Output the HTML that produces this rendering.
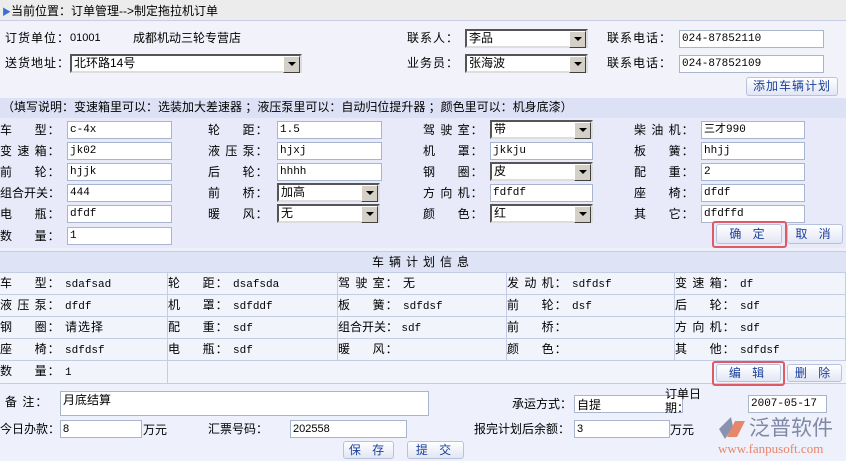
<!DOCTYPE html>
<html><head><meta charset="utf-8"><style>
*{margin:0;padding:0;box-sizing:border-box}
body{width:846px;height:461px;overflow:hidden;background:#eef0fb;font:12px "Liberation Sans","Noto Sans CJK SC",sans-serif;color:#000;position:relative}
.a{position:absolute;white-space:nowrap;line-height:14px}
.l{letter-spacing:1px}
.i{position:absolute;background:#fff;border:1px solid #a9b5cc;height:18px;font:11px "Liberation Mono","Noto Sans CJK SC",monospace;line-height:16px;padding-left:2px;white-space:nowrap}
.s{position:absolute;background:#fff;border:2px solid;border-color:#555 #ddd #ddd #555;height:19px;font-size:12px;line-height:15px;padding-left:2px;white-space:nowrap}
.s:after{content:"";position:absolute;right:0;top:0;width:15px;height:15px;background:#d4d0c8;border:1px solid;border-color:#fff #404040 #404040 #fff}
.s b{position:absolute;right:4px;top:6px;width:0;height:0;border-left:4px solid transparent;border-right:4px solid transparent;border-top:4px solid #000;z-index:2}
.b{position:absolute;background:linear-gradient(#fff,#e2e6f4);border:1px solid #b8c2dc;border-radius:3px;color:#1a3f9c;text-align:center;font-size:12px;line-height:17px;letter-spacing:4px}
.r{position:absolute;border:2px solid #e05a66;border-radius:3px}
.tc{position:absolute;border-right:1px solid #c5cde4;border-bottom:1px solid #c5cde4;height:22px;line-height:21px;font-size:12px;white-space:nowrap;letter-spacing:1px}
.tc span{font:11px "Liberation Mono",monospace;letter-spacing:0}
</style></head><body>
<div style="position:absolute;left:0;top:0;width:846px;height:21px;background:#ececec;border-bottom:1px solid #c8cfe6"></div>
<div class="a" style="left:2px;top:4px;font-size:12px"><span style="color:#3b6fd0;font-size:9px">▶</span>当前位置：订单管理-->制定拖拉机订单</div>
<div style="position:absolute;left:0;top:22px;width:846px;height:76px;background:#f2f3fa"></div>
<div class="a l" style="left:5px;top:31px">订货单位：</div><div class="a" style="left:70px;top:31px;font-size:11px">01001</div><div class="a" style="left:133px;top:31px">成都机动三轮专营店</div>
<div class="a l" style="left:407px;top:31px">联系人：</div><div class="s" style="left:465px;top:29px;width:123px">李品<b></b></div>
<div class="a l" style="left:607px;top:31px">联系电话：</div><div class="i" style="left:679px;top:30px;width:145px">024-87852110</div>
<div class="a l" style="left:5px;top:56px">送货地址：</div><div class="s" style="left:70px;top:54px;width:232px">北环路14号<b></b></div>
<div class="a l" style="left:407px;top:56px">业务员：</div><div class="s" style="left:465px;top:54px;width:123px">张海波<b></b></div>
<div class="a l" style="left:607px;top:56px">联系电话：</div><div class="i" style="left:679px;top:55px;width:145px">024-87852109</div>
<div class="b" style="left:746px;top:77px;width:92px;height:19px;letter-spacing:1px">添加车辆计划</div>
<div style="position:absolute;left:0;top:98px;width:846px;height:20px;background:#dde1f5"></div>
<div class="a" style="left:2px;top:100px">（填写说明：变速箱里可以：选装加大差速器 ；液压泵里可以：自动归位提升器 ；颜色里可以：机身底漆）</div>
<div style="position:absolute;left:0;top:118px;width:846px;height:130px;background:#e8eaf9"></div>

<div class="a l" style="left:0;top:123px">车&nbsp;&nbsp;&nbsp;&nbsp;&nbsp;型：</div><div class="i" style="left:67px;top:121px;width:105px">c-4x</div>
<div class="a l" style="left:0;top:144px">变 速 箱：</div><div class="i" style="left:67px;top:142px;width:105px">jk02</div>
<div class="a l" style="left:0;top:165px">前&nbsp;&nbsp;&nbsp;&nbsp;&nbsp;轮：</div><div class="i" style="left:67px;top:163px;width:105px">hjjk</div>
<div class="a" style="left:0;top:186px">组合开关：</div><div class="i" style="left:67px;top:184px;width:105px">444</div>
<div class="a l" style="left:0;top:207px">电&nbsp;&nbsp;&nbsp;&nbsp;&nbsp;瓶：</div><div class="i" style="left:67px;top:205px;width:105px">dfdf</div>
<div class="a l" style="left:0;top:229px">数&nbsp;&nbsp;&nbsp;&nbsp;&nbsp;量：</div><div class="i" style="left:67px;top:227px;width:105px">1</div>

<div class="a l" style="left:208px;top:123px">轮&nbsp;&nbsp;&nbsp;&nbsp;&nbsp;距：</div><div class="i" style="left:277px;top:121px;width:105px">1.5</div>
<div class="a l" style="left:208px;top:144px">液 压 泵：</div><div class="i" style="left:277px;top:142px;width:105px">hjxj</div>
<div class="a l" style="left:208px;top:165px">后&nbsp;&nbsp;&nbsp;&nbsp;&nbsp;轮：</div><div class="i" style="left:277px;top:163px;width:105px">hhhh</div>
<div class="a l" style="left:208px;top:186px">前&nbsp;&nbsp;&nbsp;&nbsp;&nbsp;桥：</div><div class="s" style="left:277px;top:183px;width:103px">加高<b></b></div>
<div class="a l" style="left:208px;top:207px">暖&nbsp;&nbsp;&nbsp;&nbsp;&nbsp;风：</div><div class="s" style="left:277px;top:204px;width:103px">无<b></b></div>

<div class="a l" style="left:423px;top:123px">驾 驶 室：</div><div class="s" style="left:490px;top:120px;width:103px">带<b></b></div>
<div class="a l" style="left:423px;top:144px">机&nbsp;&nbsp;&nbsp;&nbsp;&nbsp;罩：</div><div class="i" style="left:490px;top:142px;width:103px">jkkju</div>
<div class="a l" style="left:423px;top:165px">钢&nbsp;&nbsp;&nbsp;&nbsp;&nbsp;圈：</div><div class="s" style="left:490px;top:162px;width:103px">皮<b></b></div>
<div class="a l" style="left:423px;top:186px">方 向 机：</div><div class="i" style="left:490px;top:184px;width:103px">fdfdf</div>
<div class="a l" style="left:423px;top:207px">颜&nbsp;&nbsp;&nbsp;&nbsp;&nbsp;色：</div><div class="s" style="left:490px;top:204px;width:103px">红<b></b></div>

<div class="a l" style="left:634px;top:123px">柴 油 机：</div><div class="i" style="left:701px;top:121px;width:104px">三才990</div>
<div class="a l" style="left:634px;top:144px">板&nbsp;&nbsp;&nbsp;&nbsp;&nbsp;簧：</div><div class="i" style="left:701px;top:142px;width:104px">hhjj</div>
<div class="a l" style="left:634px;top:165px">配&nbsp;&nbsp;&nbsp;&nbsp;&nbsp;重：</div><div class="i" style="left:701px;top:163px;width:104px">2</div>
<div class="a l" style="left:634px;top:186px">座&nbsp;&nbsp;&nbsp;&nbsp;&nbsp;椅：</div><div class="i" style="left:701px;top:184px;width:104px">dfdf</div>
<div class="a l" style="left:634px;top:207px">其&nbsp;&nbsp;&nbsp;&nbsp;&nbsp;它：</div><div class="i" style="left:701px;top:205px;width:104px">dfdffd</div>

<div class="r" style="left:712px;top:221px;width:75px;height:27px"></div>
<div class="b" style="left:716px;top:224px;width:66px;height:20px;line-height:18px">确 定</div>
<div class="b" style="left:787px;top:224px;width:56px;height:20px;line-height:18px">取 消</div>

<div style="position:absolute;left:0;top:251px;width:846px;height:22px;background:#dfe3f6;border-top:1px solid #c5cde4;border-bottom:1px solid #c5cde4"></div>
<div class="a" style="left:0;top:255px;width:846px;text-align:center;letter-spacing:5px">车辆计划信息</div>
<div style="position:absolute;left:0;top:273px;width:846px;height:110px;background:#f2f4fc"></div>

<div class="tc" style="left:0;top:273px;width:168px">车&nbsp;&nbsp;&nbsp;&nbsp;&nbsp;型： <span>sdafsad</span></div>
<div class="tc" style="left:168px;top:273px;width:170px">轮&nbsp;&nbsp;&nbsp;&nbsp;&nbsp;距： <span>dsafsda</span></div>
<div class="tc" style="left:338px;top:273px;width:169px">驾 驶 室： 无</div>
<div class="tc" style="left:507px;top:273px;width:168px">发 动 机： <span>sdfdsf</span></div>
<div class="tc" style="left:675px;top:273px;width:171px">变 速 箱： <span>df</span></div>

<div class="tc" style="left:0;top:295px;width:168px">液 压 泵： <span>dfdf</span></div>
<div class="tc" style="left:168px;top:295px;width:170px">机&nbsp;&nbsp;&nbsp;&nbsp;&nbsp;罩： <span>sdfddf</span></div>
<div class="tc" style="left:338px;top:295px;width:169px">板&nbsp;&nbsp;&nbsp;&nbsp;&nbsp;簧： <span>sdfdsf</span></div>
<div class="tc" style="left:507px;top:295px;width:168px">前&nbsp;&nbsp;&nbsp;&nbsp;&nbsp;轮： <span>dsf</span></div>
<div class="tc" style="left:675px;top:295px;width:171px">后&nbsp;&nbsp;&nbsp;&nbsp;&nbsp;轮： <span>sdf</span></div>

<div class="tc" style="left:0;top:317px;width:168px">钢&nbsp;&nbsp;&nbsp;&nbsp;&nbsp;圈： 请选择</div>
<div class="tc" style="left:168px;top:317px;width:170px">配&nbsp;&nbsp;&nbsp;&nbsp;&nbsp;重： <span>sdf</span></div>
<div class="tc" style="left:338px;top:317px;width:169px;letter-spacing:0">组合开关： <span>sdf</span></div>
<div class="tc" style="left:507px;top:317px;width:168px">前&nbsp;&nbsp;&nbsp;&nbsp;&nbsp;桥：</div>
<div class="tc" style="left:675px;top:317px;width:171px">方 向 机： <span>sdf</span></div>

<div class="tc" style="left:0;top:339px;width:168px">座&nbsp;&nbsp;&nbsp;&nbsp;&nbsp;椅： <span>sdfdsf</span></div>
<div class="tc" style="left:168px;top:339px;width:170px">电&nbsp;&nbsp;&nbsp;&nbsp;&nbsp;瓶： <span>sdf</span></div>
<div class="tc" style="left:338px;top:339px;width:169px">暖&nbsp;&nbsp;&nbsp;&nbsp;&nbsp;风：</div>
<div class="tc" style="left:507px;top:339px;width:168px">颜&nbsp;&nbsp;&nbsp;&nbsp;&nbsp;色：</div>
<div class="tc" style="left:675px;top:339px;width:171px">其&nbsp;&nbsp;&nbsp;&nbsp;&nbsp;他： <span>sdfdsf</span></div>

<div class="tc" style="left:0;top:361px;width:168px;height:23px">数&nbsp;&nbsp;&nbsp;&nbsp;&nbsp;量： <span>1</span></div>
<div class="tc" style="left:168px;top:361px;width:678px;height:23px;border-right:0"></div>
<div class="r" style="left:712px;top:361px;width:73px;height:25px"></div>
<div class="b" style="left:716px;top:364px;width:65px;height:18px;line-height:16px">编 辑</div>
<div class="b" style="left:787px;top:364px;width:55px;height:18px;line-height:16px">删 除</div>

<div class="a" style="left:5px;top:395px;letter-spacing:1px">备 注：</div>
<div class="i" style="left:60px;top:391px;width:369px;height:25px;font:12px 'Liberation Sans','Noto Sans CJK SC',sans-serif;line-height:16px">月底结算</div>
<div class="a" style="left:512px;top:397px">承运方式：</div><div class="i" style="left:574px;top:395px;width:109px;font:12px 'Liberation Sans','Noto Sans CJK SC',sans-serif">自提</div>
<div class="a" style="left:665px;top:387px;line-height:14px">订单日<br>期：</div><div class="i" style="left:748px;top:395px;width:79px">2007-05-17</div>

<div class="a" style="left:0;top:422px">今日办款：</div><div class="i" style="left:60px;top:420px;width:82px;font-family:'Liberation Sans'">8</div><div class="a" style="left:143px;top:423px">万元</div>
<div class="a" style="left:208px;top:422px">汇票号码：</div><div class="i" style="left:290px;top:420px;width:117px;font-family:'Liberation Sans'">202558</div>
<div class="a" style="left:474px;top:422px">报完计划后余额：</div><div class="i" style="left:574px;top:420px;width:96px;font-family:'Liberation Sans'">3</div><div class="a" style="left:670px;top:423px">万元</div>

<div class="b" style="left:343px;top:441px;width:51px;height:18px;line-height:16px">保 存</div>
<div class="b" style="left:407px;top:441px;width:57px;height:18px;line-height:16px">提 交</div>

<svg style="position:absolute;left:716px;top:416px" width="32" height="24" viewBox="0 0 32 24">
<path d="M15 1 L3 13 L9 23 L17 11 Z" fill="#8a93ad"/>
<path d="M19 5 L29 5 L21 21 L11 21 Z" fill="#e8866a"/>
</svg>
<div class="a" style="left:749px;top:415px;font-size:21px;line-height:24px;color:#7f89a6;font-family:'Noto Sans CJK SC',sans-serif">泛普软件</div>
<div class="a" style="left:718px;top:441px;font:13px 'Liberation Serif',serif;color:#e8866a">www.fanpusoft.com</div>
</body></html>
